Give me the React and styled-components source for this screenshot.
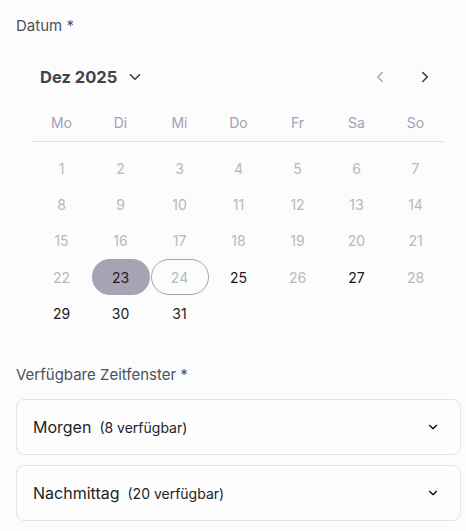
import React from "react";
import styled, { createGlobalStyle } from "styled-components";

const Global = createGlobalStyle`
  html, body { margin: 0; padding: 0; background: #fcfcfd; }
  body { font-family: Inter, "Noto Sans", sans-serif; -webkit-font-smoothing: antialiased; }
`;

const Page = styled.div`
  width: 466px;
  box-sizing: border-box;
  padding: 16px 5px 0 16px;
  display: flex;
  flex-direction: column;
`;

const Label = styled.div`
  font-size: 15px;
  line-height: 20px;
  color: #4b525a;
`;

const Calendar = styled.div`
  padding: 0 16px 0 16px;
  margin-top: 26px;
  display: flex;
  flex-direction: column;
`;

const Header = styled.div`
  display: flex;
  align-items: center;
  justify-content: space-between;
  height: 30px;
  padding: 0 11px 0 8px;
`;

const MonthBtn = styled.div`
  display: flex;
  align-items: center;
  gap: 9px;
  font-size: 16.5px;
  font-weight: 700;
  color: #3d4550;
`;

const Nav = styled.div`
  display: flex;
  align-items: center;
  gap: 27px;
`;

const NavBtn = styled.span`
  display: flex;
  color: ${(p) => (p.$muted ? "#a3a7ab" : "#2f3742")};
`;

const Weekdays = styled.div`
  display: grid;
  grid-template-columns: repeat(7, 59px);
  margin-top: 21px;
  height: 28px;
  border-bottom: 1px solid #e3e4e8;
`;

const Weekday = styled.div`
  text-align: center;
  font-size: 14px;
  line-height: 20px;
  color: #a3a0b4;
`;

const Days = styled.div`
  display: grid;
  grid-template-columns: repeat(7, 59px);
  grid-auto-rows: 36.4px;
  margin-top: 8px;
`;

const Day = styled.div`
  display: flex;
  align-items: center;
  justify-content: center;
  font-size: 14px;
  box-sizing: border-box;
  border-radius: 18px;
  color: ${(p) => (p.$disabled ? "#b2babd" : "#1b1b1d")};
  background: ${(p) => (p.$selected ? "#a8a3b4" : "transparent")};
  border: 1px solid ${(p) => (p.$today ? "#a8a3b4" : "transparent")};
  margin: 0 0.5px;
  height: 36px;
  align-self: center;
`;

const SlotLabel = styled(Label)`
  margin-top: 33px;
`;

const Slots = styled.div`
  display: flex;
  flex-direction: column;
  gap: 10px;
  margin-top: 14px;
`;

const SlotCard = styled.div`
  height: 56px;
  box-sizing: border-box;
  border: 1px solid #e4e4e7;
  border-radius: 8px;
  background: #fdfdfd;
  display: flex;
  align-items: center;
  justify-content: space-between;
  padding: 0 20px 0 16px;
`;

const SlotTitle = styled.div`
  display: flex;
  align-items: baseline;
  gap: 8px;
`;

const SlotName = styled.span`
  font-size: 16px;
  color: #1f1f22;
`;

const SlotCount = styled.span`
  font-size: 14px;
  color: #232326;
`;

const Chevron = ({ size = 16, dir = "down", width = 2 }) => {
  const d = {
    down: "M6 9l6 6 6-6",
    left: "M15 6l-6 6 6 6",
    right: "M9 6l6 6-6 6",
  }[dir];
  return (
    <svg width={size} height={size} viewBox="0 0 24 24" fill="none" stroke="currentColor" strokeWidth={width} strokeLinecap="round" strokeLinejoin="round">
      <path d={d} />
    </svg>
  );
};

const weekdays = ["Mo", "Di", "Mi", "Do", "Fr", "Sa", "So"];
const enabled = new Set([25, 27, 29, 30, 31]);

export default function App() {
  const days = Array.from({ length: 31 }, (_, i) => i + 1);
  return (
    <>
      <Global />
      <Page>
        <Label>Datum *</Label>
        <Calendar>
          <Header>
            <MonthBtn>
              Dez 2025
              <NavBtn><Chevron size={18} /></NavBtn>
            </MonthBtn>
            <Nav>
              <NavBtn $muted><Chevron dir="left" size={18} width={1.8} /></NavBtn>
              <NavBtn><Chevron dir="right" size={18} /></NavBtn>
            </Nav>
          </Header>
          <Weekdays>
            {weekdays.map((w) => (
              <Weekday key={w}>{w}</Weekday>
            ))}
          </Weekdays>
          <Days>
            {days.map((d) => (
              <Day
                key={d}
                $disabled={!enabled.has(d) && d !== 23}
                $selected={d === 23}
                $today={d === 24}
              >
                {d}
              </Day>
            ))}
          </Days>
        </Calendar>
        <SlotLabel>Verfügbare Zeitfenster *</SlotLabel>
        <Slots>
          <SlotCard>
            <SlotTitle>
              <SlotName>Morgen</SlotName>
              <SlotCount>(8 verfügbar)</SlotCount>
            </SlotTitle>
            <Chevron size={14} />
          </SlotCard>
          <SlotCard>
            <SlotTitle>
              <SlotName>Nachmittag</SlotName>
              <SlotCount>(20 verfügbar)</SlotCount>
            </SlotTitle>
            <Chevron size={14} />
          </SlotCard>
        </Slots>
      </Page>
    </>
  );
}
